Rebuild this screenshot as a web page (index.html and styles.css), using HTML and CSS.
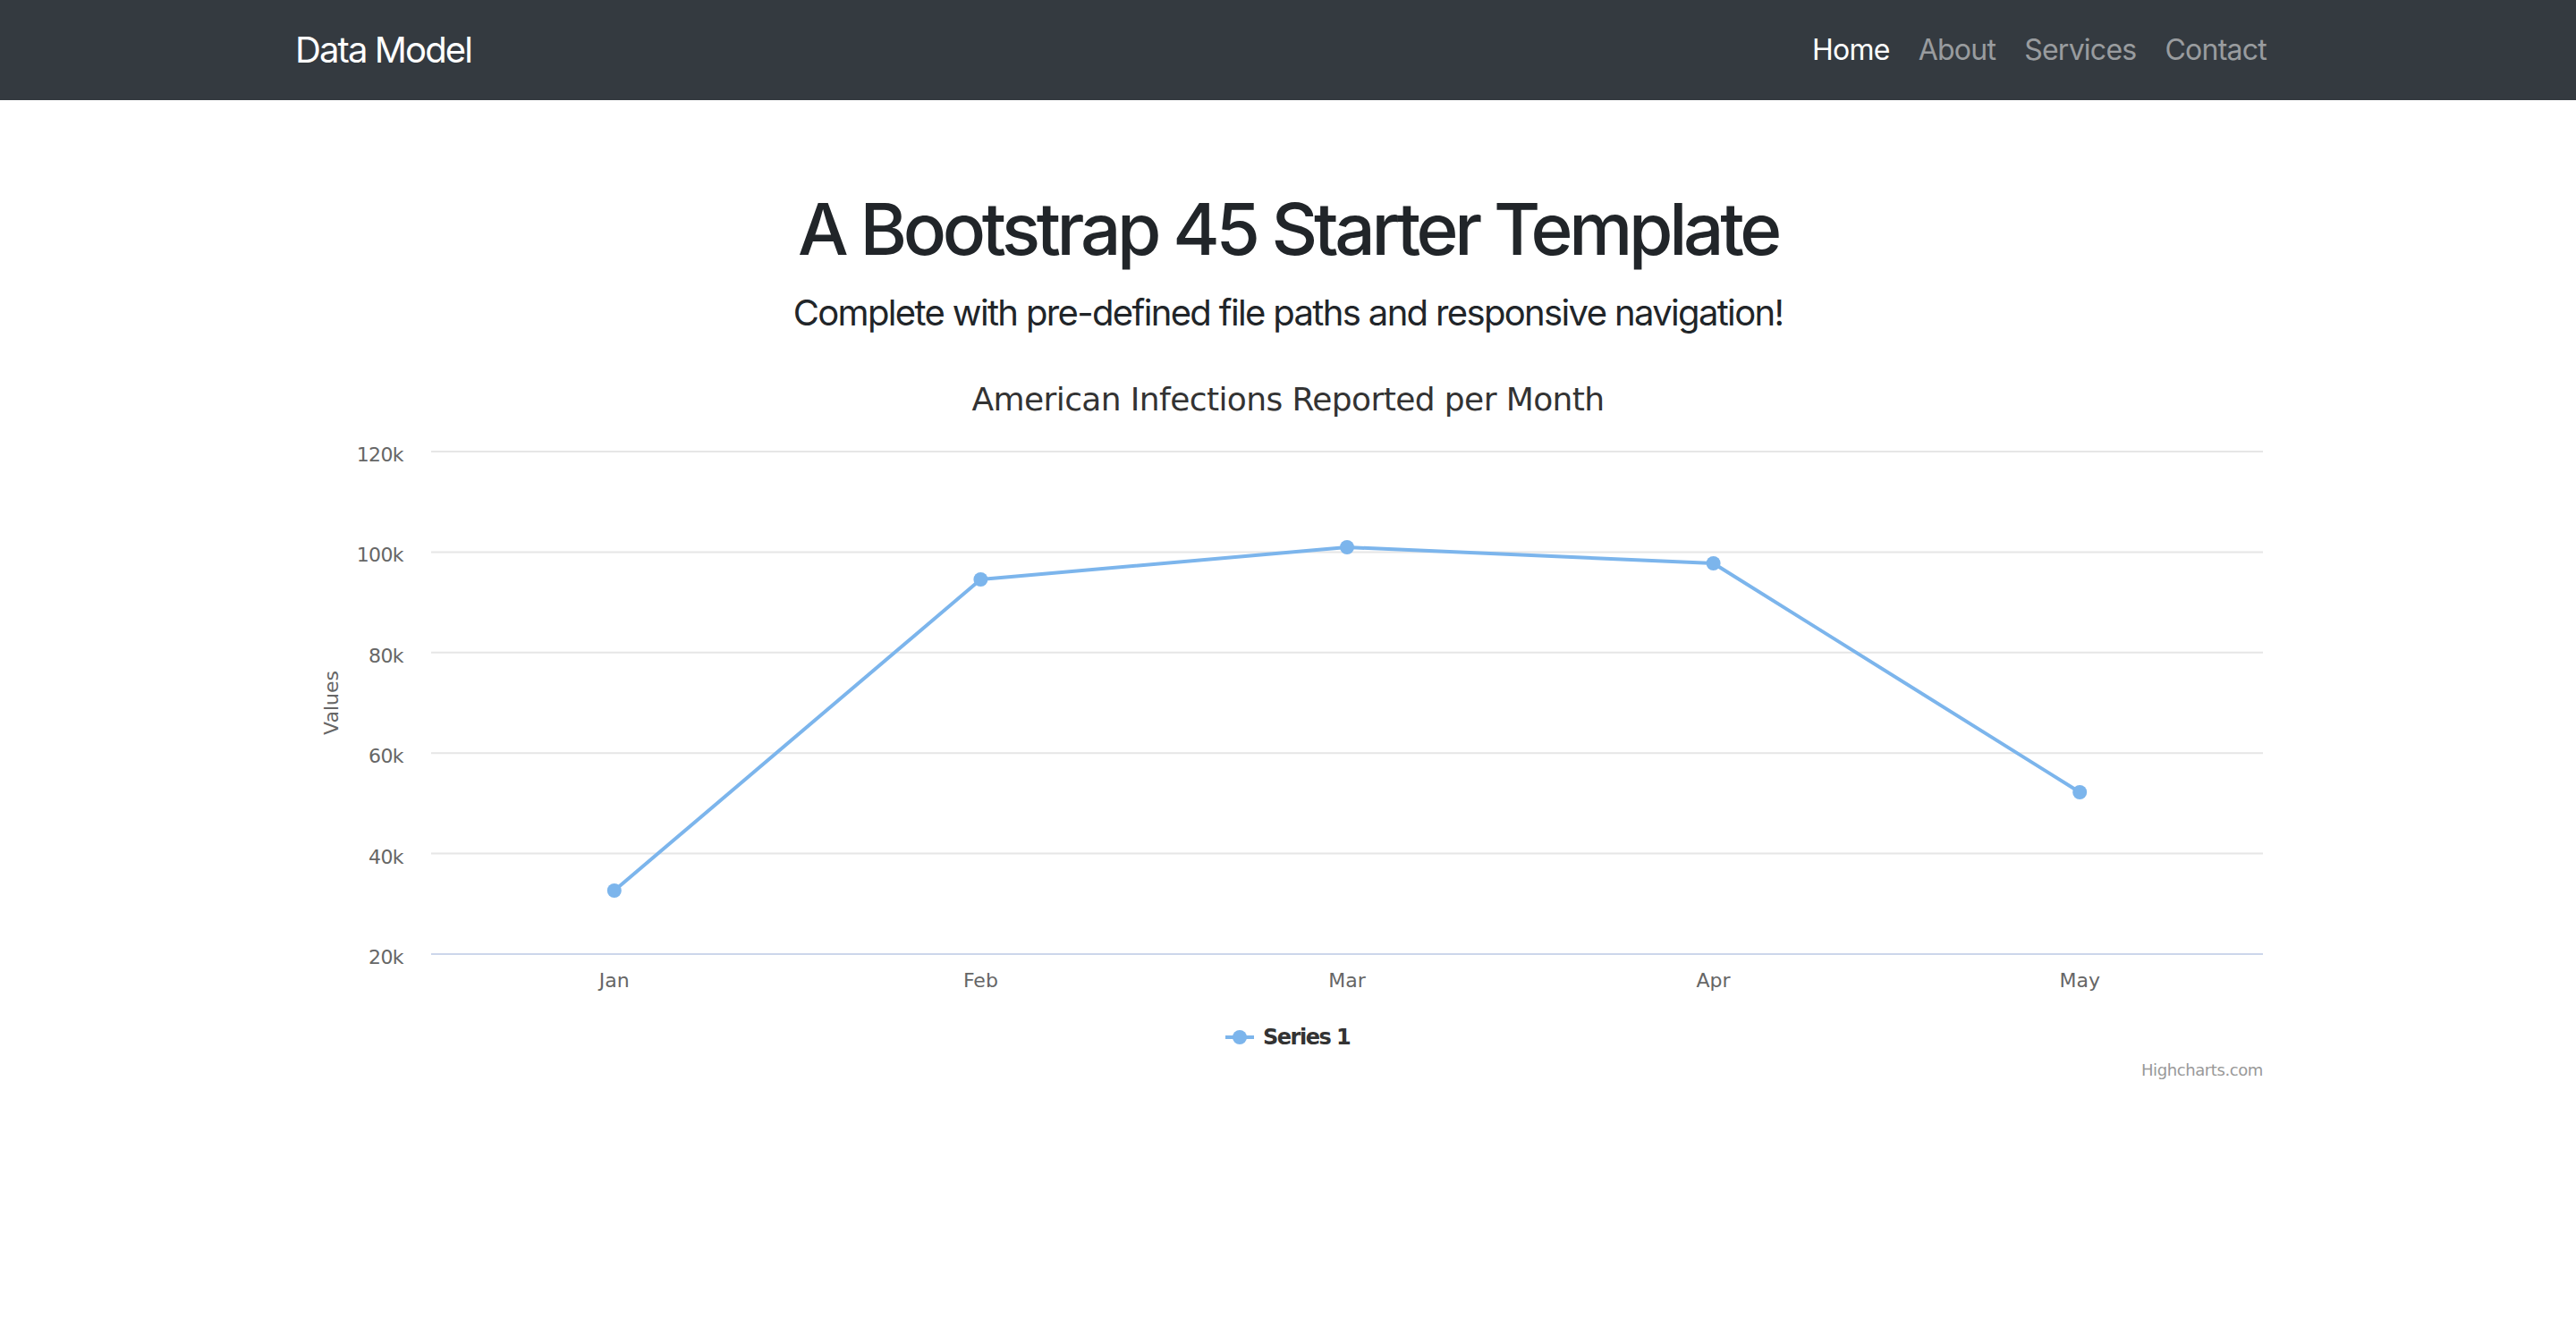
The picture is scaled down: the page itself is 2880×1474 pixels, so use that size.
FILE: index.html
```html
<!DOCTYPE html>
<html lang="en">
<head>
<meta charset="utf-8">
<title>Data Model</title>
<link rel="stylesheet" href="styles.css">
</head>
<body>
<nav class="navbar">
  <div class="container nav-inner">
    <a class="brand" href="#">Data Model</a>
    <ul class="nav-links">
      <li><a class="nav-link active" href="#">Home</a></li>
      <li><a class="nav-link" href="#">About</a></li>
      <li><a class="nav-link" href="#">Services</a></li>
      <li><a class="nav-link" href="#">Contact</a></li>
    </ul>
  </div>
</nav>
<main class="container">
  <h1 class="title">A Bootstrap 45 Starter Template</h1>
  <p class="lead">Complete with pre-defined file paths and responsive navigation!</p>
  <div class="chart">
    <svg class="chart-svg" width="2220" height="800" viewBox="0 0 2220 800" xmlns="http://www.w3.org/2000/svg">
      <text class="chart-title" x="1110" y="47" text-anchor="middle">American Infections Reported per Month</text>
      <g class="grid">
        <line x1="152" y1="93" x2="2200" y2="93"/>
        <line x1="152" y1="205.4" x2="2200" y2="205.4"/>
        <line x1="152" y1="317.8" x2="2200" y2="317.8"/>
        <line x1="152" y1="430.2" x2="2200" y2="430.2"/>
        <line x1="152" y1="542.6" x2="2200" y2="542.6"/>
      </g>
      <line class="axis" x1="152" y1="655" x2="2200" y2="655"/>
      <g class="ylabels">
        <text x="121" y="104">120k</text>
        <text x="121" y="216.4">100k</text>
        <text x="121" y="328.8">80k</text>
        <text x="121" y="441.2">60k</text>
        <text x="121" y="553.6">40k</text>
        <text x="121" y="666">20k</text>
      </g>
      <text class="ytitle" transform="translate(48,374) rotate(-90)" text-anchor="middle">Values</text>
      <g class="xlabels">
        <text x="356.8" y="692">Jan</text>
        <text x="766.4" y="692">Feb</text>
        <text x="1176" y="692">Mar</text>
        <text x="1585.6" y="692">Apr</text>
        <text x="1995.2" y="692">May</text>
      </g>
      <polyline class="series" points="356.8,584 766.4,236 1176,200 1585.6,218 1995.2,474"/>
      <g class="markers">
        <circle cx="356.8" cy="584" r="8"/>
        <circle cx="766.4" cy="236" r="8"/>
        <circle cx="1176" cy="200" r="8"/>
        <circle cx="1585.6" cy="218" r="8"/>
        <circle cx="1995.2" cy="474" r="8"/>
      </g>
      <line class="legend-line" x1="1040" y1="748" x2="1072" y2="748"/>
      <circle class="legend-dot" cx="1056" cy="748" r="8"/>
      <text class="legend-text" x="1082" y="756">Series 1</text>
      <text class="credits" x="2200" y="791" text-anchor="end">Highcharts.com</text>
    </svg>
  </div>
</main>
</body>
</html>
```

FILE: styles.css
```css
* { box-sizing: border-box; }

body {
  margin: 0;
  font-family: "Inter", "Liberation Sans", sans-serif;
  color: #212529;
  background: #fff;
}

.container {
  width: 2280px;
  margin: 0 auto;
  padding: 0 30px;
}

.navbar {
  background: #343a40;
  height: 112px;
}

.nav-inner {
  height: 112px;
  display: flex;
  align-items: center;
  justify-content: space-between;
}

.brand {
  color: #fff;
  font-size: 40px;
  letter-spacing: -1.9px;
  text-decoration: none;
  line-height: 1;
}

.nav-links {
  list-style: none;
  margin: 0;
  padding: 0;
  display: flex;
}

.nav-link {
  display: block;
  padding: 0 16px;
  font-size: 32px;
  letter-spacing: -0.75px;
  color: rgba(255, 255, 255, 0.5);
  text-decoration: none;
  line-height: 1.5;
}

.nav-link.active { color: #fff; }

main.container { text-align: center; }

.title {
  margin: 96px 0 16px;
  font-size: 80px;
  font-weight: 500;
  letter-spacing: -4.3px;
  line-height: 1.2;
  color: #212529;
}

.lead {
  margin: 0 0 32px;
  font-size: 40px;
  font-weight: 400;
  letter-spacing: -1.65px;
  line-height: 1.5;
  color: #212529;
}

.chart { height: 800px; }

.chart-svg {
  display: block;
  font-family: "DejaVu Sans", "Liberation Sans", sans-serif;
}

.chart-title {
  font-size: 36px;
  fill: #333333;
  letter-spacing: -0.6px;
}

.grid line {
  stroke: #e6e6e6;
  stroke-width: 2;
}

.axis {
  stroke: #ccd6eb;
  stroke-width: 2;
}

.ylabels text {
  font-size: 22px;
  fill: #666666;
  text-anchor: end;
  letter-spacing: -0.6px;
}

.xlabels text {
  font-size: 22px;
  fill: #666666;
  text-anchor: middle;
}

.ytitle {
  font-size: 22px;
  fill: #666666;
}

.series {
  fill: none;
  stroke: #7cb5ec;
  stroke-width: 4;
  stroke-linejoin: round;
  stroke-linecap: round;
}

.markers circle, .legend-dot { fill: #7cb5ec; }

.legend-line {
  stroke: #7cb5ec;
  stroke-width: 4;
}

.legend-text {
  font-size: 24px;
  font-weight: bold;
  fill: #333333;
  letter-spacing: -1.5px;
}

.credits {
  font-size: 18px;
  fill: #999999;
  letter-spacing: -0.4px;
}
```
